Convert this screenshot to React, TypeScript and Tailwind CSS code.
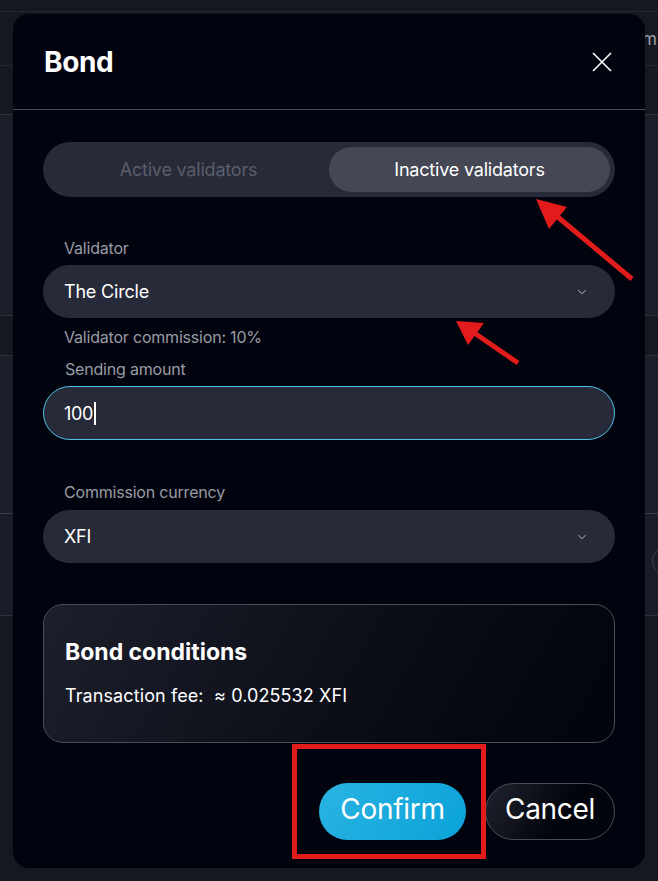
import { ChevronDown } from "lucide-react";

function Background() {
  return (
    <div className="flex flex-col text-[#9a9ca5]">
      <div className="h-[12px] border-b border-[#232633]" />
      <div className="h-[54px] flex justify-end items-center border-b border-[#232633] overflow-hidden">
        <span className="text-[17px] leading-[20px] pr-[1px]">m</span>
      </div>
      <div className="h-[49px] border-b border-[#2e313c]" />
      <div className="h-[201px] bg-[#1c1f2a] border-b border-[#2e313c]" />
      <div className="h-[40px] border-b border-[#2e313c]" />
      <div className="h-[158px] bg-[#1c1f2a] border-b border-[#3a3d48]" />
      <div className="h-[102px] bg-[#1a1d28] border-b border-[#2e313c] flex justify-end items-center">
        <div className="w-[30px] h-[30px] rounded-full border border-[#3a3d48] -mr-[24px] mt-[-8px]" />
      </div>
      <div className="flex-1" />
    </div>
  );
}

function Select({ value }: { value: string }) {
  return (
    <div className="h-[53px] rounded-full bg-[#272a38] flex items-center justify-between pl-[21px] pr-[26px]">
      <span className="text-[18px] text-white tracking-[-0.2px]">{value}</span>
      <ChevronDown size={14} strokeWidth={1.5} className="text-[#c9cad0]" />
    </div>
  );
}

function Annotations() {
  return (
    <svg className="absolute inset-0 pointer-events-none" width="658" height="881" viewBox="0 0 658 881">
      <line x1="632" y1="279" x2="553" y2="213" stroke="#e21b1b" strokeWidth="5" />
      <polygon points="536,199 567,207 549,229" fill="#e21b1b" />
      <line x1="518" y1="363" x2="470" y2="330" stroke="#e21b1b" strokeWidth="5" />
      <polygon points="456,321 484,323 468,345" fill="#e21b1b" />
      <rect x="294.5" y="746.5" width="189" height="110" fill="none" stroke="#e21b1b" strokeWidth="5" />
    </svg>
  );
}

export default function App() {
  return (
    <div className="relative w-[658px] h-[881px] overflow-hidden bg-[#151821] font-['Inter',sans-serif]">
      <Background />

      <div className="absolute left-[13px] top-[14px] w-[632px] h-[854px] rounded-[16px] bg-[#01040e] flex flex-col">
        <div className="h-[96px] shrink-0 flex items-center justify-between pl-[31px] pr-[33px] border-b border-[#4a4d58]">
          <h2 className="text-[28px] font-bold text-white tracking-[-0.4px]">Bond</h2>
          <svg width="20" height="20" viewBox="0 0 20 20">
            <path d="M1 1 L19 19 M19 1 L1 19" stroke="white" strokeWidth="1.6" />
          </svg>
        </div>

        <div className="flex flex-col px-[30px] pt-[32px]">
          <div className="h-[55px] rounded-full bg-[#272a38] p-[5px] grid grid-cols-2">
            <div className="flex items-center justify-center text-[18px] text-[#5b5e6b] tracking-[-0.2px]">Active validators</div>
            <div className="flex items-center justify-center rounded-full bg-[#454755] text-[18px] text-white tracking-[-0.2px]">
              Inactive validators
            </div>
          </div>

          <label className="mt-[41px] pl-[21px] text-[16px] leading-[20px] text-[#9a9ca5] tracking-[-0.2px]">Validator</label>
          <div className="mt-[7px]">
            <Select value="The Circle" />
          </div>
          <p className="mt-[9px] pl-[21px] text-[16px] leading-[20px] text-[#9a9ca5] tracking-[-0.2px]">Validator commission: 10%</p>

          <label className="mt-[12px] pl-[22px] text-[16px] leading-[20px] text-[#9a9ca5] tracking-[-0.2px]">Sending amount</label>
          <div className="mt-[7px] h-[54px] rounded-full bg-[#272a38] border border-[#4cc3e6] flex items-center pl-[20px]">
            <span className="text-[18px] text-white tracking-[-0.3px]">100</span>
            <span className="w-[1.5px] h-[23px] bg-white ml-[1px]" />
          </div>

          <label className="mt-[42px] pl-[21px] text-[16px] leading-[20px] text-[#9a9ca5] tracking-[-0.2px]">Commission currency</label>
          <div className="mt-[8px]">
            <Select value="XFI" />
          </div>

          <div className="mt-[41px] h-[139px] rounded-[20px] border border-[#4a4d58] bg-[linear-gradient(120deg,#1d202b_0%,#0b0d17_55%,#02040c_100%)] px-[21px] pt-[33px]">
            <h3 className="text-[23px] leading-[28px] font-bold text-white">Bond conditions</h3>
            <p className="mt-[19px] text-[18px] leading-[22px] text-white tracking-[0.1px]">
              Transaction fee:&nbsp; ≈ 0.025532 XFI
            </p>
          </div>

          <div className="mt-[40px] flex justify-end gap-[19px]">
            <button className="w-[147px] h-[57px] pb-[6px] rounded-full bg-[linear-gradient(120deg,#2ab3e2,#0aa3d8)] text-[28px] text-white tracking-[-0.3px]">
              Confirm
            </button>
            <button className="w-[130px] h-[57px] pb-[6px] rounded-full border border-[#4a4d58] bg-[linear-gradient(120deg,#20232e,#02040c_60%)] text-[28px] text-white tracking-[-0.3px]">
              Cancel
            </button>
          </div>
        </div>
      </div>

      <Annotations />
    </div>
  );
}
